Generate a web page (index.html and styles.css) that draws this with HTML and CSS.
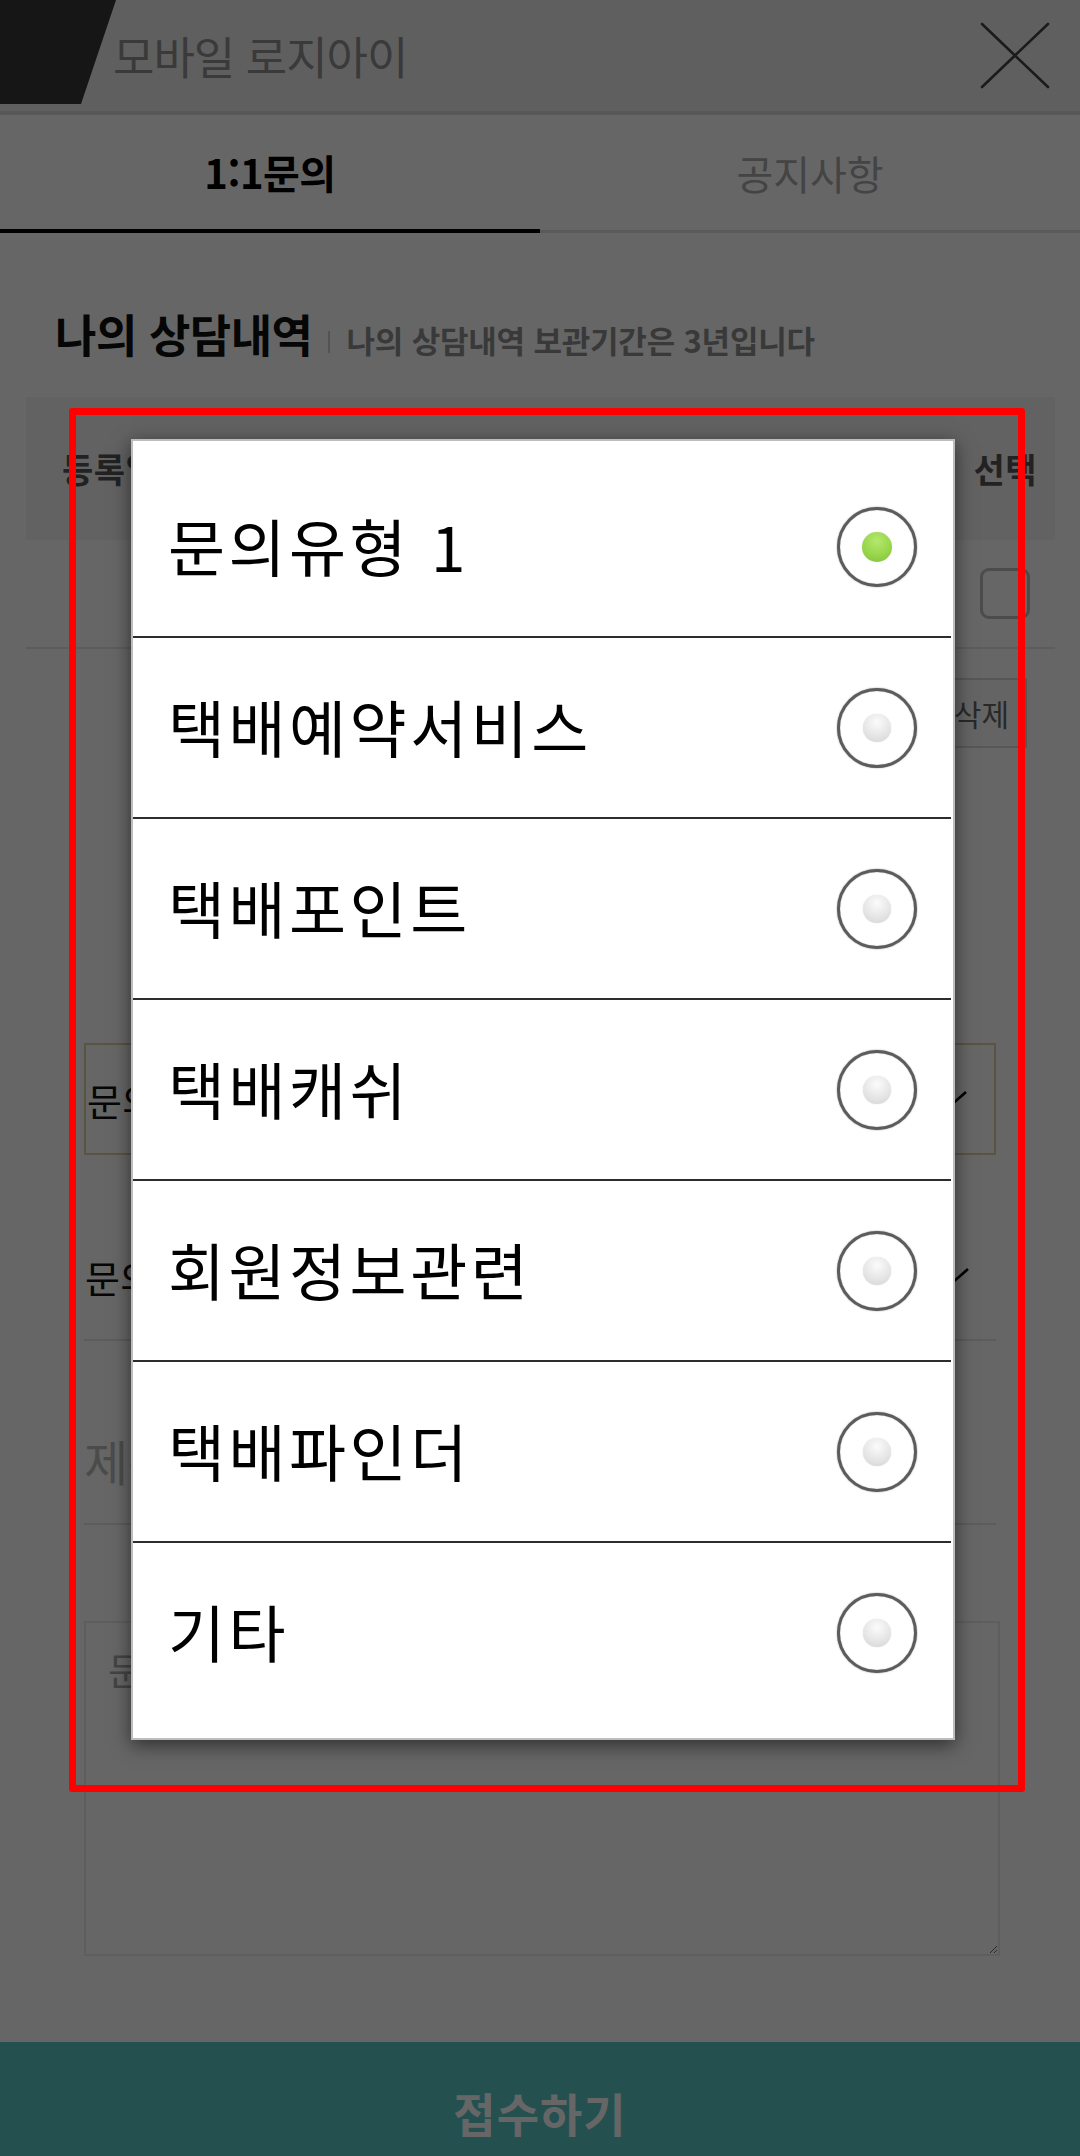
FILE: index.html
```html
<!DOCTYPE html>
<html lang="ko">
<head>
<meta charset="utf-8">
<title>모바일 로지아이 - 1:1문의</title>
<link rel="stylesheet" href="styles.css">
</head>
<body>
<div class="page">
  <header class="topbar">
    <div class="logo"></div>
    <h1 class="app-title">모바일 로지아이</h1>
    <button class="close" aria-label="닫기">
      <svg width="70" height="67" viewBox="0 0 70 67"><path d="M2 2 L68 65 M68 2 L2 65" stroke="#444" stroke-width="2.6" fill="none" stroke-linecap="round"/></svg>
    </button>
  </header>

  <nav class="tabs">
    <a class="tab active">1:1문의</a>
    <a class="tab">공지사항</a>
  </nav>

  <main class="content">
    <div class="section-head">
      <h2 class="section-title">나의 상담내역</h2>
      <span class="divider"></span>
      <p class="section-sub">나의 상담내역 보관기간은 3년입니다</p>
    </div>

    <div class="table">
      <div class="thead">
        <span>등록일</span>
        <span>선택</span>
      </div>
      <div class="trow">
        <span class="cell"></span>
        <span class="checkbox"></span>
      </div>
    </div>

    <div class="actions">
      <button class="btn-del">선택삭제</button>
    </div>

    <form class="form">
      <div class="select boxed">
        <span>문의</span>
        <svg class="chev" width="36" height="20" viewBox="0 0 36 20"><path d="M2 3 L18 17 L34 3" stroke="#000" stroke-width="2.6" fill="none"/></svg>
      </div>
      <div class="select plain">
        <span>문의</span>
        <svg class="chev" width="36" height="20" viewBox="0 0 36 20"><path d="M2 3 L18 17 L34 3" stroke="#000" stroke-width="2.6" fill="none"/></svg>
      </div>
      <div class="title-field">제목</div>
      <textarea class="body-field" placeholder="문의내용"></textarea>
    </form>
  </main>

  <button class="submit">접수하기</button>
</div>

<div class="dim"></div>

<div class="dialog" role="dialog">
  <div class="opt"><span class="opt-label">문의유형 1</span><span class="radio on"><i></i></span></div>
  <div class="opt"><span class="opt-label">택배예약서비스</span><span class="radio"><i></i></span></div>
  <div class="opt"><span class="opt-label">택배포인트</span><span class="radio"><i></i></span></div>
  <div class="opt"><span class="opt-label">택배캐쉬</span><span class="radio"><i></i></span></div>
  <div class="opt"><span class="opt-label">회원정보관련</span><span class="radio"><i></i></span></div>
  <div class="opt"><span class="opt-label">택배파인더</span><span class="radio"><i></i></span></div>
  <div class="opt"><span class="opt-label">기타</span><span class="radio"><i></i></span></div>
</div>

<div class="annot"></div>
</body>
</html>
```

FILE: styles.css
```css
* { box-sizing: border-box; }

html, body {
  margin: 0;
  padding: 0;
}

body {
  width: 1080px;
  height: 2156px;
  overflow: hidden;
  background: #fff;
  font-family: "Noto Sans CJK KR", "Noto Sans", sans-serif;
  color: #000;
  position: relative;
}

.page {
  height: 2156px;
  display: flex;
  flex-direction: column;
}

/* ---------- top bar ---------- */
.topbar {
  height: 115px;
  flex: none;
  display: flex;
  align-items: center;
  background: #eeeeee;
  border-bottom: 4px solid #dcdcdc;
}

.logo {
  align-self: flex-start;
  width: 116px;
  height: 104px;
  flex: none;
  background: #383838;
  clip-path: polygon(0 0, 116px 0, 81px 104px, 0 104px);
}

.app-title {
  margin: 0 0 0 -3px;
  font-size: 45px;
  font-weight: 400;
  color: #929292;
  letter-spacing: -1px;
}

.close {
  margin-left: auto;
  margin-right: 30px;
  padding: 0;
  border: 0;
  background: none;
  display: flex;
}

/* ---------- tabs ---------- */
.tabs {
  height: 118px;
  flex: none;
  display: flex;
}

.tab {
  flex: 1;
  display: flex;
  align-items: center;
  justify-content: center;
  font-size: 40px;
  color: #ababab;
  border-bottom: 3px solid #e2e2e2;
  padding-top: 0;
}

.tab.active {
  color: #000;
  font-weight: 700;
  letter-spacing: -0.5px;
  border-bottom: 4px solid #000;
}

/* ---------- content ---------- */
.content {
  display: flex;
  flex-direction: column;
}

.section-head {
  margin: 68px 0 0 55px;
  height: 80px;
  display: flex;
  align-items: baseline;
}

.section-title {
  margin: 0;
  font-size: 45px;
  font-weight: 700;
  color: #111;
  letter-spacing: -0.5px;
}

.divider {
  display: inline-block;
  width: 2px;
  height: 22px;
  background: #cfcfcf;
  margin: 0 17px 0 15px;
}

.section-sub {
  margin: 0;
  font-size: 31px;
  font-weight: 700;
  color: #8f8f8f;
  letter-spacing: -0.2px;
}

.table {
  margin: 16px 25px 0 26px;
}

.thead {
  height: 143px;
  background: #f5f5f5;
  display: flex;
  align-items: center;
  justify-content: space-between;
  padding: 0 18px 0 36px;
  font-size: 34px;
  font-weight: 700;
  color: #555;
  letter-spacing: 0.5px;
}

.trow {
  height: 109px;
  border-bottom: 2px solid #e6e6e6;
  display: flex;
  align-items: center;
  justify-content: space-between;
  padding: 0 25px 0 37px;
}

.checkbox {
  width: 50px;
  height: 51px;
  border: 3px solid #bdbdbd;
  border-radius: 9px;
  background: #fff;
}

.actions {
  margin-top: 29px;
  display: flex;
  justify-content: flex-end;
  padding-right: 53px;
}

.btn-del {
  height: 70px;
  padding: 0 16px;
  border: 2px solid #dadada;
  background: #fafafa;
  font-family: inherit;
  font-size: 30px;
  color: #666;
}

.form {
  margin: 0 84px;
  display: flex;
  flex-direction: column;
}

.select {
  display: flex;
  align-items: center;
  justify-content: space-between;
  font-size: 38px;
  color: #111;
  padding-left: 1px;
}

.select.boxed {
  margin-top: 295px;
  height: 112px;
  border: 2px solid #e3cfa6;
}

.select.plain {
  margin-top: 60px;
  height: 126px;
  border-bottom: 2px solid #e6e6e6;
  padding-bottom: 2px;
}

.chev {
  margin-right: 26px;
}

.title-field {
  margin-top: 56px;
  height: 128px;
  display: flex;
  align-items: center;
  border-bottom: 2px solid #e6e6e6;
  font-size: 48px;
  color: #bbb;
  padding-left: 0;
}

.body-field {
  margin: 96px -4px 0 0;
  height: 335px;
  border: 2px solid #ececec;
  padding: 18px 22px;
  font-family: inherit;
  font-size: 38px;
  color: #000;
  outline: none;
  resize: vertical;
}

.body-field::placeholder {
  color: #aaa;
}

.submit {
  margin-top: auto;
  height: 114px;
  flex: none;
  border: 0;
  background: #5ac8c8;
  color: #fff;
  font-family: inherit;
  font-size: 46px;
  font-weight: 700;
  letter-spacing: 1px;
  padding-top: 26px;
}

/* ---------- overlay ---------- */
.dim {
  position: absolute;
  inset: 0;
  background: rgba(0, 0, 0, 0.6);
}

.dialog {
  position: absolute;
  left: 131px;
  top: 439px;
  width: 824px;
  height: 1301px;
  background: #fff;
  border: 2px solid #bdbdbd;
  padding: 16px 0;
  box-shadow: 0 5px 18px rgba(0, 0, 0, 0.55);
  display: flex;
  flex-direction: column;
}

.opt {
  height: 181px;
  flex: none;
  display: flex;
  align-items: center;
  justify-content: space-between;
  padding: 0 34px 0 35px;
  border-bottom: 2px solid #2c2c2c;
  margin-right: 2px;
}

.opt:last-child {
  height: 179px;
  border-bottom: 0;
}

.opt-label {
  font-size: 62px;
  letter-spacing: 3.5px;
  color: #000;
  margin-top: -4px;
}

.radio {
  width: 80px;
  height: 80px;
  border-radius: 50%;
  border: 3px solid #5c5c5c;
  box-shadow: 0 0 1.5px rgba(0, 0, 0, 0.55), inset 0 0 1px rgba(0, 0, 0, 0.4);
  display: flex;
  align-items: center;
  justify-content: center;
  background: #fff;
}

.radio i {
  width: 28px;
  height: 28px;
  border-radius: 50%;
  background: radial-gradient(circle at 50% 30%, #fbfbfb 0%, #e4e4e4 60%, #d2d2d2 100%);
  box-shadow: 0 0 1px rgba(0, 0, 0, 0.25);
}

.radio.on i {
  width: 30px;
  height: 30px;
  background: radial-gradient(circle at 50% 30%, #b4e86c 0%, #98d64c 55%, #7fbf36 100%);
}

/* screenshot annotation */
.annot {
  position: absolute;
  left: 69px;
  top: 408px;
  width: 956px;
  height: 1384px;
  border: 7px solid #ff0000;
  border-radius: 3px;
}
```
